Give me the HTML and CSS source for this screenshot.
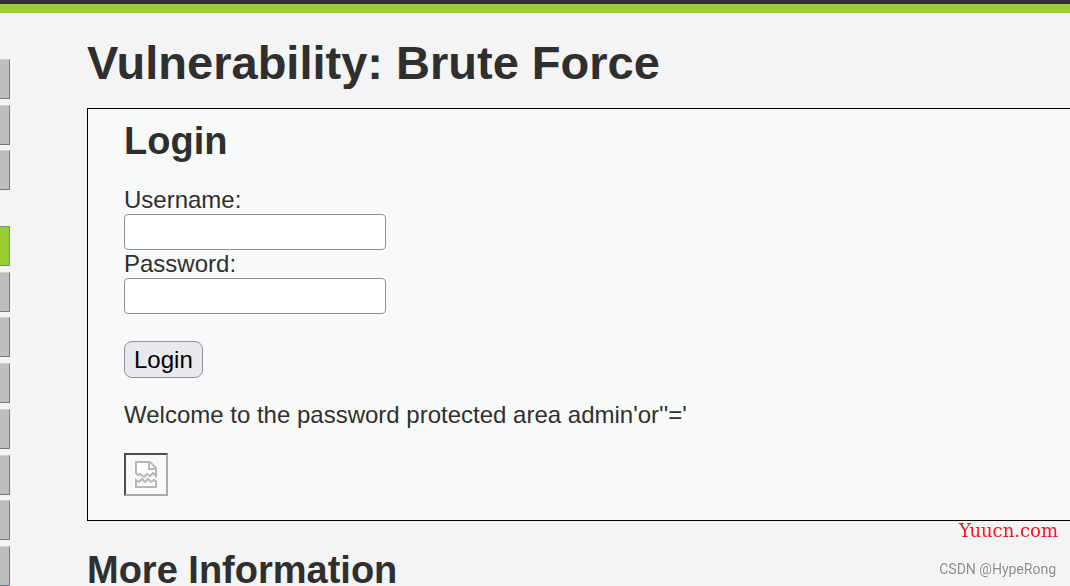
FILE: index.html
```html
<!DOCTYPE html>
<html lang="en">
<head>
  <meta charset="UTF-8" />
  <meta name="viewport" content="width=device-width, initial-scale=1.0" />
  <title>Vulnerability: Brute Force</title>
  <link rel="stylesheet" href="styles.css">
</head>
<body>
  <header class="header"></header>

  <div class="container">
    <!-- Main menu -->
    <nav class="main-menu">
      <ul class="menu-block">
        <li><a href="#"></a></li>
        <li><a href="#"></a></li>
        <li><a href="#"></a></li>
      </ul>
      <ul class="menu-block menu-attacks">
        <li class="selected"><a href="#"></a></li>
        <li><a href="#"></a></li>
        <li><a href="#"></a></li>
        <li><a href="#"></a></li>
        <li><a href="#"></a></li>
        <li><a href="#"></a></li>
        <li><a href="#"></a></li>
        <li><a href="#"></a></li>
      </ul>
    </nav>

    <main class="main-body">
      <h1>Vulnerability: Brute Force</h1>

      <div class="vulnerable-area">
        <h2>Login</h2>
        <form class="login-form" action="#" method="get">
          <label for="username">Username:</label>
          <input type="text" id="username" name="username">
          <label for="password">Password:</label>
          <input type="password" id="password" name="password" autocomplete="off">
          <button type="submit" name="Login">Login</button>
        </form>
        <p>Welcome to the password protected area admin'or''='</p>
        <!-- Missing user picture -->
        <div class="user-image">
          <svg width="24" height="28" viewBox="0 0 24 28" fill="#fff" stroke="#b8b8b8" stroke-width="2">
            <path d="M2 12V1h14l6 6v8l-3-3-3 3-3-2-3 3-4-3-2 1z" />
            <path d="M15 1v7h7" fill="none" />
            <path d="M2 26v-7l3 2 3-3 3 3 3-3 3 3 3-2 2 1v6z" />
          </svg>
        </div>
      </div>

      <h2>More Information</h2>
    </main>
  </div>

  <div class="watermark">
    <span class="site">Yuucn.com</span>
    <span class="author">CSDN @HypeRong</span>
  </div>
</body>
</html>
```
FILE: styles.css
```css
* { box-sizing: border-box; }
body {
  margin: 0;
  height: 100vh;
  overflow: hidden;
  background: #f4f4f4;
  color: #2f2f2f;
  font-family: Arial, "Liberation Sans", sans-serif;
  font-size: 24px;
  line-height: 28px;
}
.header {
  height: 13px;
  background: #2f2f2f;
  border-bottom: 9px solid #a1cc33;
}
.container {
  display: flex;
}
/* Main menu */
.main-menu {
  width: 10px;
  padding-top: 46px;
}
.menu-block {
  list-style: none;
  margin: 0 0 36px;
  padding: 0;
  display: flex;
  flex-direction: column;
  justify-content: space-between;
  height: 131px;
}
.menu-attacks {
  height: 360px;
  margin-bottom: 0;
}
.menu-block li {
  height: 40px;
  background: #bebebe;
  border: 1px solid #6e7890;
  border-top-color: #d2d2d2;
  border-left: 0;
}
.menu-block .selected {
  background: #99cc33;
  border-color: #7088b0;
}
.menu-block a {
  display: block;
  height: 100%;
}
/* Page content */
.main-body {
  flex: 1;
  padding: 22px 0 0 77px;
}
h1 {
  margin: 0 0 18px;
  font-size: 47px;
  line-height: 55px;
}
h2 {
  margin: 0;
  font-size: 38px;
  line-height: 44px;
}
.vulnerable-area {
  margin-bottom: 27px;
  padding: 10px 36px 24px;
  background: #f8faf9;
  border: 1px solid #000;
  border-right: 0;
}
.login-form {
  display: flex;
  flex-direction: column;
  align-items: flex-start;
  margin-top: 23px;
}
.login-form input {
  width: 262px;
  height: 36px;
  padding: 2px 4px;
  border: 1px solid #8f8f9d;
  border-radius: 4px;
  background: #fff;
  font: inherit;
}
.login-form button {
  height: 37px;
  margin-top: 27px;
  padding: 0 9px;
  border: 1px solid #8f8f9d;
  border-radius: 8px;
  background: #e9e9ed;
  color: #000;
  font: inherit;
}
.vulnerable-area p {
  margin: 23px 0 24px;
}
.user-image {
  display: flex;
  align-items: center;
  justify-content: center;
  width: 44px;
  height: 43px;
  border: 2px solid #4e4e4e;
  border-right-color: #aaa;
  border-bottom-color: #aaa;
}
/* Watermark over the corner */
.watermark {
  position: fixed;
  right: 12px;
  bottom: 6px;
  display: flex;
  flex-direction: column;
  align-items: flex-end;
  gap: 16px;
  line-height: 22px;
}
.site {
  color: #ff0f23;
  font-family: "DejaVu Serif", serif;
  font-size: 18px;
}
.author {
  padding-right: 2px;
  color: #8c8c8c;
  font-family: Roboto, sans-serif;
  font-size: 14px;
  text-shadow: -1px -1px 0 #fff;
}
```
